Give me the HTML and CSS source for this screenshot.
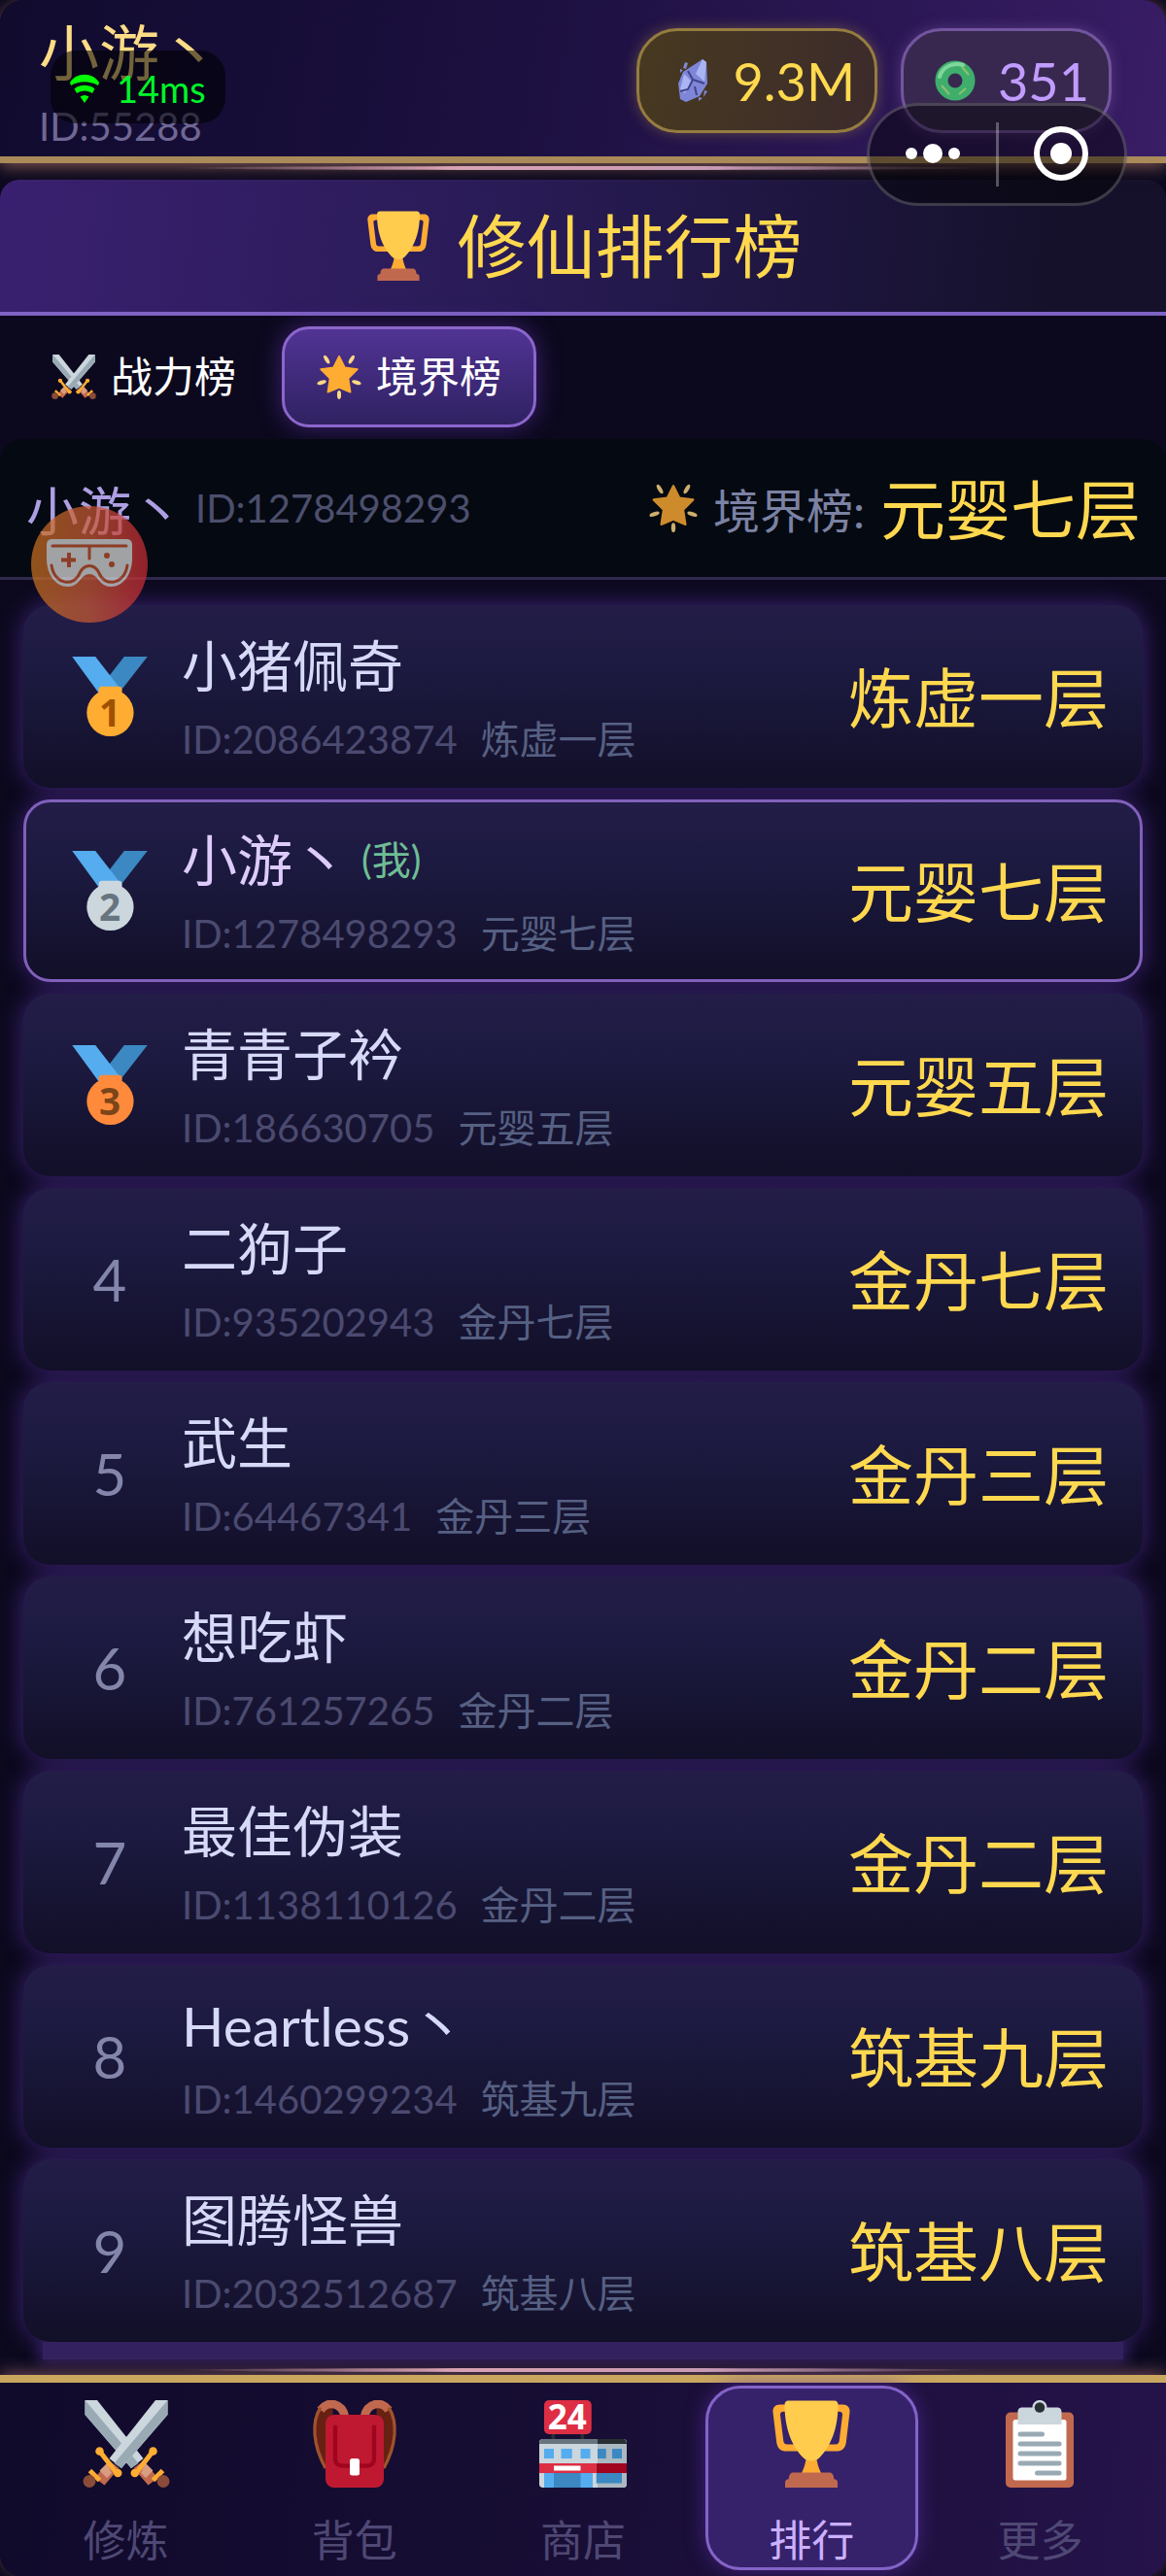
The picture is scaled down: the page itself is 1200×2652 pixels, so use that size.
FILE: index.html
```html
<!DOCTYPE html>
<html lang="zh-CN">
<head>
  <meta charset="UTF-8" />
  <meta name="viewport" content="width=device-width, initial-scale=1.0"/>
  <title>修仙排行榜</title>
  <link rel="stylesheet" href="styles.css">
</head>
<body>
  <!-- 共用图标 -->
  <svg class="icon-defs" aria-hidden="true">
    <symbol id="icon-trophy" viewBox="0 0 36 36">
      <path fill="#FFAC33" d="M5.1 1.8h25.8c2 0 3.1 1.200 2.900 3.200l-1.500 12.500c-.3 2-1.500 3.500-3.500 3.500H7.200c-2 0-3.200-1.500-3.500-3.500L2.200 5c-.2-2 .9-3.200 2.900-3.200zM6.500 4.700c-.9 0-1.400.5-1.300 1.400l1.300 10.600c.1.900.6 1.500 1.500 1.500h4L9 4.700zm23 0H27l-3 13.500h4c.9 0 1.400-.6 1.500-1.500l1.300-10.600c.1-.9-.4-1.400-1.300-1.400z"/>
      <path fill="#FFAC33" d="M16 23h4c.5 4 1.500 6 2.500 8h-9c1-2 2-4 2.500-8z"/>
      <path fill="#FFCC4D" d="M8.500.2h19c1 0 1.500.7 1.500 1.700 0 12-4.500 18.500-7.500 21.600-1.800 2-5.200 2-7 0C11.500 20.400 7 14 7 1.900 7 .9 7.500.2 8.500.2z"/>
      <path fill="#C1694F" d="M10.500 29.800h15c1 0 1.800 1 1.800 2.700 1 0 1.500.6 1.500 1.500v2H7.200v-2c0-.9.5-1.500 1.500-1.500 0-1.700.8-2.700 1.800-2.700z"/>
    </symbol>
    <symbol id="icon-crossed" viewBox="0 0 36 36">
      <g transform="matrix(-1 0 0 1 36 0)"><use href="#sword"/></g>
      <g id="sword">
        <path fill="#CCD6DD" d="M35 0v6L16 28l-5-4L30 0z"/>
        <path fill="#99AAB5" d="M35 0v6L16 28l-3-2z"/>
        <path fill="#C1694F" d="M11 25l4 3-6 7-4-3z"/>
        <path fill="#D99E82" d="M10 26l2 4-2 2-3-3z"/>
        <path stroke="#FFAC33" stroke-width="2" fill="none" d="M7 21l7 9M3 29l4 4"/>
        <circle cx="7" cy="21" r="1.700" fill="#FFAC33"/>
        <circle cx="14.500" cy="30" r="1.700" fill="#FFAC33"/>
        <circle cx="2.800" cy="33.400" r="2.600" fill="#8A4B38"/>
      </g>
    </symbol>
    <symbol id="icon-star" viewBox="0 0 36 36">
      <g fill="#FFD983">
        <ellipse cx="8" cy="4" rx="1.500" ry="3.800" transform="rotate(-32 8 4)"/>
        <ellipse cx="28" cy="4" rx="1.500" ry="3.800" transform="rotate(32 28 4)"/>
        <ellipse cx="4" cy="22.500" rx="1.600" ry="3.800" transform="rotate(72 4 22.500)"/>
        <ellipse cx="32" cy="22.500" rx="1.600" ry="3.800" transform="rotate(-72 32 22.500)"/>
        <ellipse cx="18" cy="32.500" rx="1.600" ry="3.500"/>
      </g>
      <path fill="#FFAC33" stroke="#FFAC33" stroke-width="1.500" stroke-linejoin="round" d="M18 1.500l4.500 9 10.200 1.300-7.400 7.400 1.700 11L18 26.500l-9 3.700 1.700-11-7.400-7.400 10.200-1.300z"/>
    </symbol>
    <symbol id="icon-ribbon" viewBox="0 0 36 36">
      <path fill="#3B88C3" d="M24.500 0H35L22.500 16l-5-7z"/>
      <path fill="#55ACEE" d="M1 0h10.500l12 15.500-5 4-5.500-3z"/>
      <rect x="13" y="13.500" width="10.500" height="6" rx="1.500"/>
      <circle cx="18.200" cy="25.400" r="10.600"/>
    </symbol>
    <symbol id="icon-backpack" viewBox="0 0 36 36">
      <path fill="#662113" d="M3 3h6v24H6C2 21 1 9 3 3zM33 3h-6v24h3c4-6 5-18 3-24z"/>
      <path fill="none" stroke="#C1694F" stroke-width="3.500" d="M14 7C13 1 7 0 4 4M22 7c1-6 7-7 10-3"/>
      <path fill="none" stroke="#A0522D" stroke-width="1.300" d="M4 3C0 9 1 19 6 28M32 3c4 6 3 16-2 25"/>
      <rect x="6" y="6" width="24" height="30" rx="3.500" fill="#BE1931"/>
      <path fill="none" stroke="#A0041E" stroke-width="1.700" stroke-linecap="round" d="M10 11v13c0 2 1 3 3 3h10c2 0 3-1 3-3V11"/>
      <rect x="16" y="24" width="4" height="7" rx="1" fill="#fff"/>
    </symbol>
    <symbol id="icon-clipboard" viewBox="0 0 36 36">
      <rect x="4" y="5" width="28" height="31" rx="2" fill="#C1694F"/>
      <rect x="7" y="8" width="22" height="25" rx="1" fill="#fff"/>
      <path fill="#CCD6DD" d="M11 3h4c0-4 6-4 6 0h4c1.500 0 2 .7 2 2v5H9V5c0-1.300.5-2 2-2z"/>
      <circle cx="18" cy="3" r="2.100" fill="#292F33"/>
      <path stroke="#99AAB5" stroke-width="2" stroke-linecap="round" d="M10 14h9M10 18h16M10 22h16M10 26h16M17 30h9"/>
    </symbol>
  </svg>

  <header class="top-bar">
    <div class="profile">
      <div class="profile-name">小游丶</div>
      <div class="profile-id">ID:55288</div>
    </div>
    <div class="currency">
      <div class="pill pill-gold">
        <svg viewBox="0 0 48 48">
          <path fill="#7f86d8" d="M36 2l4 3 1 22-8 13-14 6-6-3-2-16 5-12z"/>
          <path fill="#aab4f2" d="M36 2l-7 15 9 8 2-20zM17 17l8 8-7 12-5-4z"/>
          <path fill="none" stroke="#41438a" stroke-width="2" d="M21 14l5 9 12 4M26 23l-5 10-8 2M28 30l2 9"/>
          <path fill="#8289d2" d="M18 5l3 1-2 6-3-1zM13 12l3 1-3 3zM38 34l3 1-4 6zM32 41l4 1-4 3z"/>
        </svg>
        <span>9.3M</span>
      </div>
      <div class="pill pill-purple">
        <svg viewBox="0 0 48 48">
          <circle cx="24" cy="24" r="14" fill="none" stroke="#3fae6c" stroke-width="13"/>
          <path fill="none" stroke="#7fd69b" stroke-width="4" stroke-linecap="round" d="M8 20C11 9 23 5 32 8"/>
          <path fill="none" stroke="#8fc06c" stroke-width="2" d="M31 10l7 8M10 29l8 9M35 32l-7 6"/>
        </svg>
        <span>351</span>
      </div>
    </div>
  </header>

  <section class="title-panel">
    <svg viewBox="0 0 36 36"><use href="#icon-trophy"/></svg>
    <h1>修仙排行榜</h1>
  </section>

  <div class="tabs">
    <button class="tab" type="button"><svg viewBox="0 0 36 36"><use href="#icon-crossed"/></svg>战力榜</button>
    <button class="tab tab-active" type="button"><svg viewBox="0 0 36 36"><use href="#icon-star"/></svg>境界榜</button>
  </div>

  <section class="my-rank">
    <span class="my-name">小游丶</span>
    <span class="my-id">ID:1278498293</span>
    <span class="my-label"><svg viewBox="0 0 36 36"><use href="#icon-star"/></svg>境界榜:</span>
    <span class="my-value">元婴七层</span>
  </section>

  <ol class="rank-list">
    <li class="rank-item">
      <div class="rank-no"><svg class="gold" viewBox="0 0 36 36"><use href="#icon-ribbon"/><text x="18" y="31.500">1</text></svg></div>
      <div class="rank-info">
        <div class="rank-name">小猪佩奇</div>
        <div class="rank-meta"><span>ID:2086423874</span><span class="realm">炼虚一层</span></div>
      </div>
      <div class="rank-value">炼虚一层</div>
    </li>
    <li class="rank-item is-me">
      <div class="rank-no"><svg class="silver" viewBox="0 0 36 36"><use href="#icon-ribbon"/><text x="18" y="31.500">2</text></svg></div>
      <div class="rank-info">
        <div class="rank-name">小游丶<span class="me-tag">(我)</span></div>
        <div class="rank-meta"><span>ID:1278498293</span><span class="realm">元婴七层</span></div>
      </div>
      <div class="rank-value">元婴七层</div>
    </li>
    <li class="rank-item">
      <div class="rank-no"><svg class="bronze" viewBox="0 0 36 36"><use href="#icon-ribbon"/><text x="18" y="31.500">3</text></svg></div>
      <div class="rank-info">
        <div class="rank-name">青青子衿</div>
        <div class="rank-meta"><span>ID:186630705</span><span class="realm">元婴五层</span></div>
      </div>
      <div class="rank-value">元婴五层</div>
    </li>
    <li class="rank-item">
      <div class="rank-no">4</div>
      <div class="rank-info">
        <div class="rank-name">二狗子</div>
        <div class="rank-meta"><span>ID:935202943</span><span class="realm">金丹七层</span></div>
      </div>
      <div class="rank-value">金丹七层</div>
    </li>
    <li class="rank-item">
      <div class="rank-no">5</div>
      <div class="rank-info">
        <div class="rank-name">武生</div>
        <div class="rank-meta"><span>ID:64467341</span><span class="realm">金丹三层</span></div>
      </div>
      <div class="rank-value">金丹三层</div>
    </li>
    <li class="rank-item">
      <div class="rank-no">6</div>
      <div class="rank-info">
        <div class="rank-name">想吃虾</div>
        <div class="rank-meta"><span>ID:761257265</span><span class="realm">金丹二层</span></div>
      </div>
      <div class="rank-value">金丹二层</div>
    </li>
    <li class="rank-item">
      <div class="rank-no">7</div>
      <div class="rank-info">
        <div class="rank-name">最佳伪装</div>
        <div class="rank-meta"><span>ID:1138110126</span><span class="realm">金丹二层</span></div>
      </div>
      <div class="rank-value">金丹二层</div>
    </li>
    <li class="rank-item">
      <div class="rank-no">8</div>
      <div class="rank-info">
        <div class="rank-name">Heartless丶</div>
        <div class="rank-meta"><span>ID:1460299234</span><span class="realm">筑基九层</span></div>
      </div>
      <div class="rank-value">筑基九层</div>
    </li>
    <li class="rank-item">
      <div class="rank-no">9</div>
      <div class="rank-info">
        <div class="rank-name">图腾怪兽</div>
        <div class="rank-meta"><span>ID:2032512687</span><span class="realm">筑基八层</span></div>
      </div>
      <div class="rank-value">筑基八层</div>
    </li>
  </ol>

  <nav class="bottom-nav">
    <a href="#train"><svg viewBox="0 0 36 36"><use href="#icon-crossed"/></svg>修炼</a>
    <a href="#bag"><svg viewBox="0 0 36 36"><use href="#icon-backpack"/></svg>背包</a>
    <a href="#shop">
      <svg viewBox="0 0 36 36">
        <path fill="#292F33" d="M5 13h1.500v4H5zM17 13h1.500v4H17z"/>
        <rect y="16" width="36" height="20" rx="1.500" fill="#CCD6DD"/>
        <path fill="#66757F" d="M1.500 16H24v2H0c0-1 .5-2 1.500-2z"/>
        <path fill="#292F33" d="M24 16h10.500c1 0 1.500 1 1.500 2H24z"/>
        <path fill="#AAB8C2" d="M24 18h12v16.500c0 1-.5 1.500-1.500 1.500H24z"/>
        <path fill="#55ACEE" d="M2 20h4v4H2zM9 20h4.500v4H9zM17 20h4v4h-4zM2 30h20v6H2z"/>
        <path fill="#3B88C3" d="M24 20h3.500v4H24zM30 20h4v4h-4zM6 30h11v6H6zM23.500 30H34v4.200H23.500z"/>
        <path fill="#DD2E44" d="M0 26h23.500v4H0z"/>
        <path fill="#A0041E" d="M23.500 26H36v4H23.500z"/>
        <rect x="6" y="27" width="11" height="2" fill="#fff"/>
        <rect x="2" width="19.500" height="14" rx="2" fill="#DD2E44"/>
        <text x="11.500" y="11.800" text-anchor="middle" class="shop-text">24</text>
      </svg>商店
    </a>
    <a href="#rank" class="nav-active"><svg viewBox="0 0 36 36"><use href="#icon-trophy"/></svg>排行</a>
    <a href="#more"><svg viewBox="0 0 36 36"><use href="#icon-clipboard"/></svg>更多</a>
  </nav>

  <!-- 悬浮层 -->
  <div class="ping">
    <svg viewBox="0 0 30 30">
      <path d="M0 9C6-2 24-2 30 9l-1 3C20 7 10 7 1 12zM4.500 15.500c5-5 16-5 21 0L23 20c-5-3.500-11-3.500-16 0zM10.500 23.500c3-2 6-2 9 0L15 30z"/>
    </svg>
    <span>14ms</span>
  </div>
  <div class="capsule">
    <button type="button" aria-label="更多操作">
      <svg viewBox="0 0 60 60"><circle cx="8" cy="30" r="6"/><circle cx="30" cy="30" r="10"/><circle cx="52" cy="30" r="6"/></svg>
    </button>
    <button type="button" aria-label="关闭">
      <svg viewBox="0 0 60 60"><circle class="ring" cx="30" cy="30" r="25"/><circle cx="30" cy="30" r="11"/></svg>
    </button>
  </div>
  <button class="float-ball" type="button" aria-label="游戏助手">
    <svg viewBox="0 0 88 50">
      <path fill="#ddd" d="M6 0h76c4 0 6 2 6 6v14c0 16-9 29-22 29-12 0-13-13-22-13s-10 13-22 13C9 49 0 36 0 20V6c0-4 2-6 6-6z"/>
      <path fill="none" stroke="#c2512c" stroke-width="3" stroke-linecap="round" d="M6 7h76M44 8v12M5 27c3 21 24 22 29 8 5-10 15-10 20 0 5 14 26 13 29-8"/>
      <path stroke="#c2512c" stroke-width="4" d="M23 14v15M15 21.500h15"/>
      <circle cx="62" cy="17" r="3" fill="#c2512c"/>
      <circle cx="67" cy="26" r="3" fill="#c2512c"/>
    </svg>
  </button>
</body>
</html>
```

FILE: styles.css
```css
* {
  box-sizing: border-box;
}
body {
  margin: 0;
  min-height: 100vh;
  display: flex;
  flex-direction: column;
  position: relative;
  background-color: #0c091e;
  color: #d6d9f7;
  font-family: Lato, "Noto Sans CJK SC", sans-serif;
  font-size: 40px;
}
button {
  border: none;
  background: none;
  padding: 0;
  font-family: inherit;
  cursor: pointer;
}
.icon-defs {
  position: absolute;
  width: 0;
  height: 0;
}

/* 顶部 */
.top-bar {
  position: relative;
  display: flex;
  justify-content: space-between;
  height: 168px;
  padding: 12px 56px 0 40px;
  background: linear-gradient(100deg, #110b2e, #1c1040 45%, #391d66);
  border-bottom: 7px solid #a98a58;
  border-radius: 24px 24px 0 0;
  box-shadow: 0 4px 16px rgba(190, 130, 110, 0.6);
}
.top-bar::after,
.bottom-nav::before {
  content: "";
  position: absolute;
  left: 15%;
  right: 15%;
  height: 4px;
  border-radius: 50%;
  background: linear-gradient(90deg, transparent, #d9a3b4, #c79ab5, transparent);
}
.top-bar::after {
  bottom: -14px;
}
.profile-name {
  font-size: 62px;
  line-height: 84px;
  color: #fddc86;
}
.profile-id {
  line-height: 60px;
  margin-top: 4px;
  color: #6f6794;
}
.currency {
  display: flex;
  align-items: flex-start;
  gap: 24px;
  padding-top: 17px;
}
.pill {
  display: flex;
  align-items: center;
  gap: 20px;
  height: 108px;
  padding: 0 20px 0 29px;
  border: 3px solid;
  border-radius: 42px;
  font-size: 54px;
}
.pill svg {
  width: 48px;
  height: 48px;
}
.pill-gold {
  color: #ffd94f;
  background: linear-gradient(100deg, #473920, #3c2b2b);
  border-color: #957c40;
  box-shadow: 0 0 14px rgba(149, 124, 64, 0.5);
}
.pill-purple {
  color: #c19cff;
  background-color: #38284f;
  border-color: #73559f;
  box-shadow: 0 0 14px rgba(115, 85, 159, 0.5);
}

/* 标题 */
.title-panel {
  display: flex;
  align-items: center;
  justify-content: center;
  gap: 24px;
  height: 140px;
  margin-top: 17px;
  border-bottom: 4px solid #7f63c4;
  border-radius: 20px 20px 0 0;
  background: linear-gradient(97deg, #3a2070, #281b55 45%, #15112b 90%);
}
.title-panel svg {
  width: 72px;
  height: 72px;
}
.title-panel h1 {
  margin: 0;
  font-size: 71px;
  font-weight: 400;
  line-height: 100px;
  color: #ffd84f;
}

/* 榜单切换 */
.tabs {
  display: flex;
  gap: 11px;
  padding: 11px 17px 12px;
}
.tab {
  display: flex;
  align-items: center;
  gap: 15px;
  height: 104px;
  padding: 0 33px;
  border: 3px solid transparent;
  border-radius: 28px;
  font-size: 43px;
  line-height: 60px;
  color: #fff;
}
.tab svg {
  width: 46px;
  height: 46px;
}
.tab-active {
  background: linear-gradient(#523496, #2e2160) border-box;
  border-color: #8c66cc;
  box-shadow: 0 0 24px rgba(95, 50, 170, 0.6);
}

/* 我的排名 */
.my-rank {
  display: flex;
  align-items: center;
  height: 145px;
  padding: 0 26px 0 27px;
  border-bottom: 3px solid #312a50;
  border-radius: 24px 24px 0 0;
  background-color: #050912;
}
.my-name {
  font-size: 54px;
  color: #ae9fe3;
}
.my-id {
  margin: 0 auto 0 12px;
  color: #4c4f6c;
}
.my-label {
  display: flex;
  align-items: center;
  gap: 16px;
  font-size: 48px;
  color: #7b82a3;
}
.my-label svg {
  width: 50px;
  height: 50px;
  opacity: 0.8;
}
.my-value {
  margin-left: 16px;
}
.my-value,
.rank-value {
  padding-bottom: 6px;
  font-size: 67px;
  color: #ffd84f;
}

/* 列表 */
.rank-list {
  flex: 1;
  display: flex;
  flex-direction: column;
  gap: 12px;
  margin: 0;
  padding: 26px 24px 16px;
  list-style: none;
  isolation: isolate;
}
/* 列表底部的光带 */
.rank-list::after {
  content: "";
  position: relative;
  z-index: -1;
  height: 18px;
  margin: -12px 20px 0;
  background-color: #33215f;
  box-shadow: 0 0 14px 4px #33215f;
}
.rank-item {
  position: relative;
  display: flex;
  align-items: center;
  gap: 14px;
  height: 188px;
  padding: 0 32px 0 26px;
  border: 3px solid transparent;
  border-radius: 28px;
  background: linear-gradient(#231d48, #1c1a40 35%, #120f28) border-box;
}
.rank-item::before {
  content: "";
  position: absolute;
  inset: 0;
  z-index: -1;
  border-radius: 28px;
  box-shadow: 0 0 22px 6px #351f66;
}
.is-me {
  border-color: #8160bb;
}
.rank-no {
  width: 120px;
  text-align: center;
  font-size: 60px;
  color: #8386aa;
}
.rank-no svg {
  display: block;
  width: 82px;
  height: 82px;
  margin: 0 auto;
}
.rank-no text {
  font-family: "Noto Sans", sans-serif;
  font-size: 17px;
  font-weight: 700;
  text-anchor: middle;
}
.gold {
  fill: #ffac33;
}
.gold text {
  fill: #9e5200;
}
.silver {
  fill: #ccd6dd;
}
.silver text {
  fill: #66757f;
}
.bronze {
  fill: #ff8a3b;
}
.bronze text {
  fill: #7c4419;
}
.rank-info {
  flex: 1;
  padding-top: 8px;
}
.rank-name {
  display: flex;
  align-items: center;
  gap: 14px;
  font-size: 57px;
  line-height: 76px;
}
.is-me .rank-name {
  color: #dccbfb;
}
.rank-name .me-tag {
  font-size: 40px;
  color: #6fbd95;
}
.rank-meta {
  display: flex;
  gap: 24px;
  margin-top: 4px;
  line-height: 68px;
  color: #4b4a70;
}
.realm {
  color: #566083;
}

/* 底部导航 */
.bottom-nav {
  position: relative;
  display: flex;
  height: 208px;
  padding: 3px 12px 0;
  border-top: 8px solid #caa75f;
  border-radius: 0 0 24px 24px;
  background: linear-gradient(97deg, #100a2b, #180e35 50%, #25134a);
  box-shadow: 0 -4px 16px rgba(150, 100, 110, 0.6);
}
.bottom-nav::before {
  top: -15px;
}
.bottom-nav a {
  flex: 1;
  display: flex;
  flex-direction: column;
  align-items: center;
  height: 190px;
  margin: 0 8px;
  padding-top: 12px;
  border: 3px solid transparent;
  border-radius: 36px;
  font-size: 44px;
  line-height: 56px;
  text-decoration: none;
  color: #4f4874;
}
.bottom-nav svg {
  flex-shrink: 0;
  width: 90px;
  height: 90px;
  margin-bottom: 26px;
  overflow: visible;
}
.bottom-nav .nav-active {
  color: #cbb0ff;
  background-color: #36226a;
  border-color: #8463c8;
  box-shadow: 0 0 20px rgba(95, 50, 170, 0.6);
}
.shop-text {
  font-family: "Noto Sans", sans-serif;
  font-size: 14px;
  font-weight: 700;
  fill: #fff;
}

/* 悬浮层 */
.ping {
  position: absolute;
  top: 52px;
  left: 52px;
  display: flex;
  align-items: center;
  gap: 18px;
  height: 75px;
  padding: 2px 20px 0;
  border-radius: 26px;
  background-color: rgba(0, 0, 0, 0.55);
  font-size: 38px;
  color: #00f52a;
}
.ping svg {
  width: 30px;
  height: 30px;
  fill: #00ff00;
}
.capsule {
  position: absolute;
  top: 106px;
  right: 40px;
  display: flex;
  align-items: center;
  width: 268px;
  height: 106px;
  border: 3px solid rgba(255, 255, 255, 0.2);
  border-radius: 53px;
  background-color: rgba(0, 0, 0, 0.45);
}
.capsule button {
  flex: 1;
  height: 66px;
}
.capsule button + button {
  border-left: 3px solid rgba(255, 255, 255, 0.3);
}
.capsule svg {
  width: 60px;
  height: 60px;
  fill: #fff;
}
.capsule .ring {
  fill: none;
  stroke: #fff;
  stroke-width: 6px;
}
.float-ball {
  position: absolute;
  top: 521px;
  left: 32px;
  width: 120px;
  height: 120px;
  border-radius: 50%;
  background: linear-gradient(90deg, #c7701f, #c95a35 50%, #c92b35);
  opacity: 0.72;
}
.float-ball svg {
  width: 88px;
  height: 50px;
}
```
